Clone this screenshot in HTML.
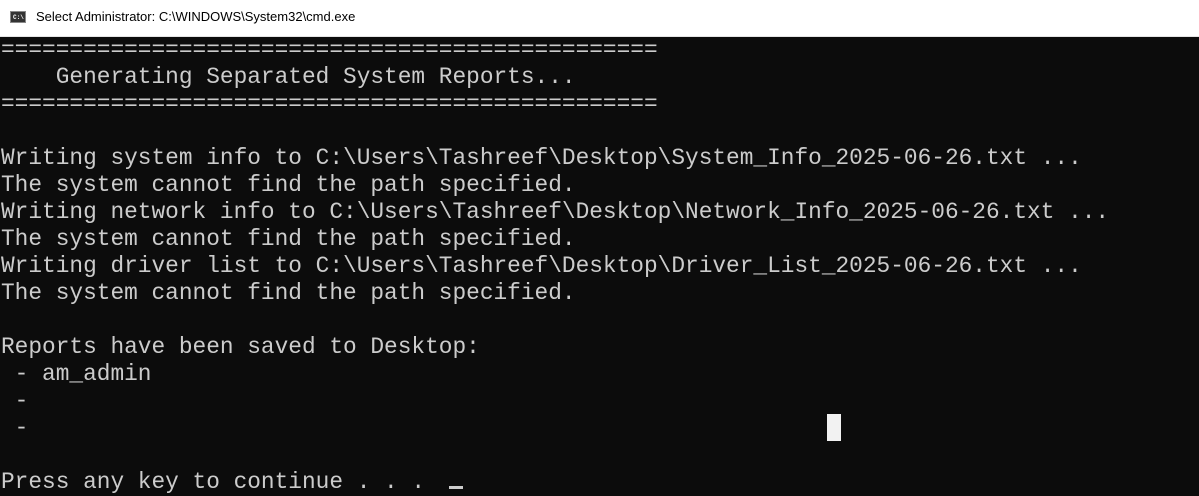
<!DOCTYPE html>
<html><head><style>
html,body{margin:0;padding:0;width:1199px;height:492px;overflow:hidden;background:#0c0c0c}
.title{position:absolute;left:0;top:0;width:1199px;height:36px;background:#fff;border-bottom:1px solid #e5e5e5}
.title span{position:absolute;left:36px;top:9px;font:13px "Liberation Sans",sans-serif;color:#000}
.icon{position:absolute;left:10px;top:11px;width:16px;height:12px;background:#333;border:1px solid #888;box-sizing:border-box}
.icon i{position:absolute;left:2px;top:2px;font:bold 6px "Liberation Mono",monospace;color:#fff;font-style:normal}
pre{position:absolute;left:1px;top:37px;margin:0;font:22.8px/27px "Liberation Mono",monospace;color:#cccccc;letter-spacing:0}
.blk{position:absolute;left:827px;top:414px;width:14px;height:27px;background:#f2f2f2}
.und{position:absolute;left:449px;top:486px;width:14px;height:3px;background:#ccc}
</style></head><body>
<div class="title"><div class="icon"><i>C:\</i></div><span>Select Administrator: C:\WINDOWS\System32\cmd.exe</span></div>
<pre>================================================
    Generating Separated System Reports...
================================================

Writing system info to C:\Users\Tashreef\Desktop\System_Info_2025-06-26.txt ...
The system cannot find the path specified.
Writing network info to C:\Users\Tashreef\Desktop\Network_Info_2025-06-26.txt ...
The system cannot find the path specified.
Writing driver list to C:\Users\Tashreef\Desktop\Driver_List_2025-06-26.txt ...
The system cannot find the path specified.

Reports have been saved to Desktop:
 - am_admin
 -
 -

Press any key to continue . . .</pre>
<div class="blk"></div><div class="und"></div>
</body></html>
